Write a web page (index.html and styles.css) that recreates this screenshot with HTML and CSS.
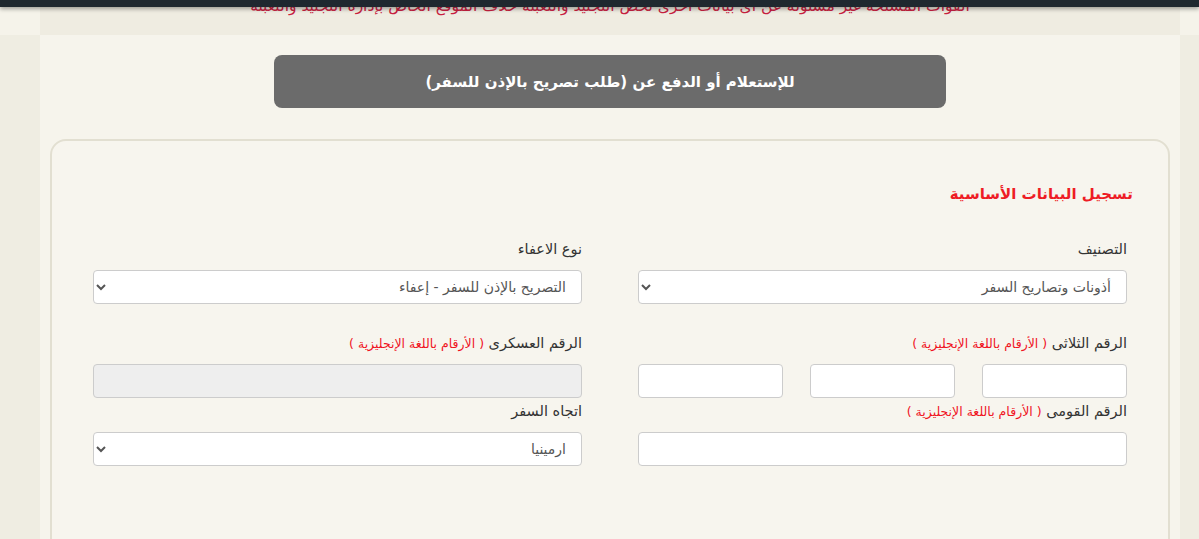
FILE: index.html
```html
<!DOCTYPE html>
<html lang="ar" dir="rtl">
<head>
<meta charset="utf-8">
<title>تسجيل البيانات الأساسية</title>
<link rel="stylesheet" href="styles.css">
</head>
<body>
<div class="topbar"></div>
<div class="notice-band">
  <div class="notice-inner">
    <p class="notice">القوات المسلحة غير مسئولة عن اى بيانات اخرى تخص التجنيد والتعبئة خلاف الموقع الخاص بإدارة التجنيد والتعبئة</p>
  </div>
</div>
<div class="main-band">
  <div class="main-inner">
    <div class="inquiry-btn">للإستعلام أو الدفع عن (طلب تصريح بالإذن للسفر)</div>
    <div class="card">
      <h2 class="card-title">تسجيل البيانات الأساسية</h2>
      <div class="form-grid">
        <div class="group group-first">
          <label class="label">التصنيف</label>
          <select class="control"><option>أذونات وتصاريح السفر</option></select>
        </div>
        <div class="group group-first">
          <label class="label">نوع الاعفاء</label>
          <select class="control"><option>التصريح بالإذن للسفر - إعفاء</option></select>
        </div>
        <div class="group">
          <label class="label">الرقم الثلاثى <span class="hint">( الأرقام باللغة الإنجليزية )</span></label>
          <div class="triple">
            <input class="control" type="text">
            <input class="control" type="text">
            <input class="control" type="text">
          </div>
        </div>
        <div class="group">
          <label class="label">الرقم العسكرى <span class="hint">( الأرقام باللغة الإنجليزية )</span></label>
          <input class="control control-disabled" type="text" disabled>
        </div>
        <div class="group">
          <label class="label">الرقم القومى <span class="hint">( الأرقام باللغة الإنجليزية )</span></label>
          <input class="control" type="text">
        </div>
        <div class="group">
          <label class="label">اتجاه السفر</label>
          <select class="control"><option>ارمينيا</option></select>
        </div>
      </div>
    </div>
  </div>
</div>
</body>
</html>
```

FILE: styles.css
```css
html, body {
  margin: 0;
  padding: 0;
}
body {
  background: #efede2;
  font-family: "DejaVu Sans", "Noto Sans", sans-serif;
  color: #333;
  height: 539px;
  overflow: hidden;
}
.topbar {
  position: absolute;
  top: 0;
  left: 0;
  right: 0;
  height: 7px;
  background: #1f282f;
  box-shadow: 0 2px 4px rgba(0, 0, 0, 0.35);
  z-index: 5;
}
.notice-band {
  background: #f5f3ea;
  height: 35px;
}
.notice-inner {
  margin: 0 19px 0 40px;
  height: 35px;
  background: #efece1;
  overflow: hidden;
}
.notice {
  margin: -5px 0 0;
  text-align: center;
  color: #c8203f;
  font-size: 15.5px;
  line-height: 22px;
}
.main-band {
  background: #efede2;
  height: 504px;
}
.main-inner {
  margin: 0 19px 0 40px;
  height: 504px;
  background: #f6f4ec;
  padding: 20px 10px 0;
  box-sizing: border-box;
  overflow: hidden;
}
.inquiry-btn {
  width: 672px;
  height: 53px;
  margin: 0 auto;
  background: #6b6b6b;
  border-radius: 8px;
  color: #fff;
  font-weight: bold;
  font-size: 15px;
  display: flex;
  align-items: center;
  justify-content: center;
}
.card {
  margin-top: 31px;
  border: 2px solid #e2dfd1;
  border-radius: 16px;
  background: #f7f5ee;
  padding: 40px 41px 120px;
}
.card-title {
  margin: 0 -6px 0 0;
  color: #ee1c25;
  font-size: 15px;
  font-weight: bold;
  line-height: 26px;
}
.form-grid {
  margin-top: 32px;
  display: grid;
  grid-template-columns: 1fr 1fr;
  column-gap: 56px;
  row-gap: 3px;
}
.group {
  display: flex;
  flex-direction: column;
}
.group-first {
  margin-bottom: 26px;
}
.label {
  display: block;
  height: 20px;
  font-size: 14.5px;
  line-height: 20px;
  color: #333;
  margin-bottom: 11px;
}
.hint {
  color: #f0131e;
  font-size: 12.5px;
  line-height: 1;
}
.control {
  height: 34px;
  box-sizing: border-box;
  border: 1px solid #ccc;
  border-radius: 4px;
  background: #fff;
  font-family: "DejaVu Sans", sans-serif;
  font-size: 14px;
  color: #555;
  padding: 0 11px;
  width: 100%;
  direction: rtl;
}
.control-disabled {
  background: #eeeeee;
}
.triple {
  display: grid;
  grid-template-columns: 1fr 1fr 1fr;
  column-gap: 27px;
}
```
